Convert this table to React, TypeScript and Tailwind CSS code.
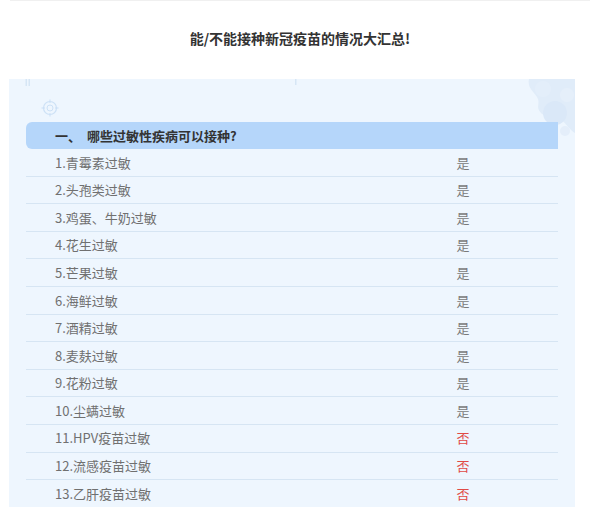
import React from "react";

const rows: [string, boolean][] = [
  ["1.青霉素过敏", true],
  ["2.头孢类过敏", true],
  ["3.鸡蛋、牛奶过敏", true],
  ["4.花生过敏", true],
  ["5.芒果过敏", true],
  ["6.海鲜过敏", true],
  ["7.酒精过敏", true],
  ["8.麦麸过敏", true],
  ["9.花粉过敏", true],
  ["10.尘螨过敏", true],
  ["11.HPV疫苗过敏", false],
  ["12.流感疫苗过敏", false],
  ["13.乙肝疫苗过敏", false],
];

export default function App() {
  return (
    <div
      className="w-[600px] h-[507px] overflow-hidden bg-white"
      style={{ fontFamily: '"Microsoft YaHei", "Noto Sans CJK SC", "Noto Sans", sans-serif' }}
    >
      <div className="h-px mx-[10px] bg-[#f0f0f0]" />
      <div className="pt-[27px] h-[78px] text-center text-[14px] leading-[20px] font-bold text-[#333333]">
        能/不能接种新冠疫苗的情况大汇总!
      </div>
      <div className="relative ml-[9px] w-[566px] bg-[#eef6fe] pt-[43px] pb-[20px]">
        {/* decorations */}
        <svg className="absolute left-[16px] top-[0px]" width="6" height="8" viewBox="0 0 6 8">
          <rect x="0.5" y="0" width="1.5" height="7" fill="#d6e6f5" />
          <rect x="3.5" y="0" width="1.5" height="7" fill="#d6e6f5" />
        </svg>
        <svg className="absolute left-[285px] top-[0px]" width="4" height="7" viewBox="0 0 4 7">
          <rect x="1" y="0" width="1.5" height="6" fill="#d6e6f5" />
        </svg>
        <svg className="absolute left-[32px] top-[20px]" width="18" height="18" viewBox="0 0 18 18">
          <circle cx="9" cy="9" r="6.5" fill="none" stroke="#cde1f6" strokeWidth="1.2" />
          <circle cx="9" cy="9" r="3" fill="none" stroke="#cde1f6" strokeWidth="1" />
          <line x1="9" y1="0.5" x2="9" y2="4" stroke="#cde1f6" strokeWidth="1.1" />
          <line x1="9" y1="14" x2="9" y2="17.5" stroke="#cde1f6" strokeWidth="1.1" />
          <line x1="0.5" y1="9" x2="4" y2="9" stroke="#cde1f6" strokeWidth="1.1" />
          <line x1="14" y1="9" x2="17.5" y2="9" stroke="#cde1f6" strokeWidth="1.1" />
        </svg>
        <svg className="absolute right-[0px] top-[0px]" width="62" height="60" viewBox="0 0 62 60">
          <path d="M16 0 C14 8 20 12 24 18 C28 24 22 28 28 34 C34 40 42 34 48 40 C54 46 58 52 62 54 L62 0 Z" fill="#e0ecf9" />
          <circle cx="42" cy="34" r="12" fill="#dae8f8" />
          <circle cx="30" cy="10" r="8" fill="#e3eefa" />
          <circle cx="54" cy="16" r="7" fill="#e5effa" />
          <circle cx="52" cy="52" r="5" fill="#e4eefa" />
        </svg>
        <div className="relative ml-[17px] w-[532px]">
          <div className="flex h-[27px] items-center rounded-l-[6px] bg-[#b5d6fa] pl-[29px] text-[13px] font-bold text-[#333333]">
            一、&nbsp;&nbsp;哪些过敏性疾病可以接种?
          </div>
          {rows.map(([name, ok], i) => (
            <div
              key={i}
              className="flex h-[27.6px] items-center border-b border-[#d6e5f3] text-[13px] text-[#707070]"
            >
              <div className="flex-1 pl-[29px]">{name}</div>
              <div className={`w-[40px] mr-[75px] text-center ${ok ? "text-[#7a7a7a]" : "text-[#e04a45]"}`}>
                {ok ? "是" : "否"}
              </div>
            </div>
          ))}
        </div>
      </div>
    </div>
  );
}
